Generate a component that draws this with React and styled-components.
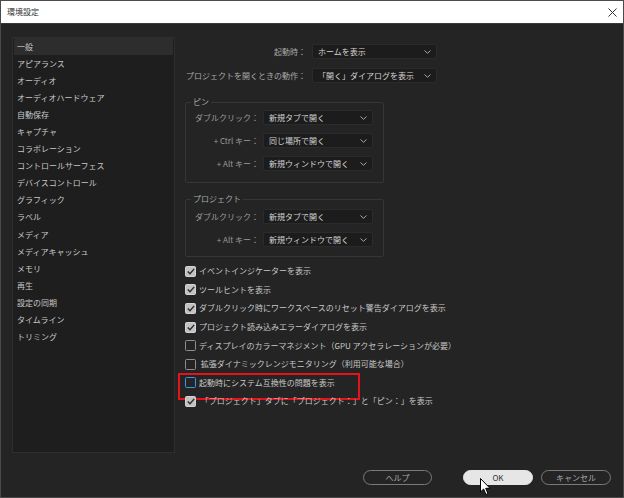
import React from "react";
import styled, { createGlobalStyle } from "styled-components";

const Global = createGlobalStyle`
  html, body { margin: 0; padding: 0; background: #242424; }
  body { font-family: "Noto Sans CJK JP", "Noto Sans", sans-serif; }
  * { box-sizing: border-box; }
`;

const Window = styled.div`
  position: relative;
  width: 624px;
  height: 498px;
  background: #242424;
  border: 1px solid #4a4a4a;
  display: flex;
  flex-direction: column;
  overflow: hidden;
  font-size: 8px;
  line-height: 1;
`;

const TitleBar = styled.div`
  height: 23px;
  background: #ffffff;
  border-bottom: 1px solid #3a3a3a;
  display: flex;
  align-items: center;
  justify-content: space-between;
  padding: 0 6px 0 6px;
  color: #333;
  font-size: 8px;
  flex-shrink: 0;
`;

const CloseIcon = () => (
  <svg width="9" height="9" viewBox="0 0 9 9">
    <path d="M0.5 0.5 L8.5 8.5 M8.5 0.5 L0.5 8.5" stroke="#333" strokeWidth="1" />
  </svg>
);

const Body = styled.div`
  flex: 1;
  display: flex;
  padding: 13px 0 0 11px;
  gap: 10px;
`;

const Sidebar = styled.div`
  width: 163px;
  height: 416px;
  background: #1e1e1e;
  border: 1px solid #2e2e2e;
  padding: 0 1px;
  display: flex;
  flex-direction: column;
`;

const NavItem = styled.div`
  height: 17.1px;
  display: flex;
  align-items: center;
  padding-left: 3px;
  color: #c8c8c8;
  background: ${(p) => (p.$active ? "#2d2d2d" : "transparent")};
`;

const Content = styled.div`
  display: flex;
  flex-direction: column;
  padding-top: 7px;
`;

const TopGrid = styled.div`
  display: grid;
  grid-template-columns: 121px 125px;
  column-gap: 6px;
  row-gap: 9px;
  align-items: center;
`;

const Label = styled.div`
  text-align: right;
  color: ${(p) => p.$color || "#a8a8a8"};
  white-space: nowrap;
`;

const SelectBox = styled.div`
  height: 15px;
  background: #1c1c1c;
  border: 1px solid #2b2b2b;
  border-radius: 2px;
  display: flex;
  align-items: center;
  justify-content: space-between;
  padding: 0 5px 0 5px;
  color: #d4d4d4;
  white-space: nowrap;
`;

const Chevron = () => (
  <svg width="7" height="4" viewBox="0 0 7 4">
    <path d="M0.5 0.5 L3.5 3.3 L6.5 0.5" stroke="#a8a8a8" strokeWidth="1" fill="none" />
  </svg>
);

const Select = ({ value }) => (
  <SelectBox>
    <span>{value}</span>
    <Chevron />
  </SelectBox>
);

const Group = styled.fieldset`
  margin: ${(p) => p.$mt || 0}px 0 0 0;
  width: 198px;
  border: 1px solid #363636;
  border-radius: 2px;
  padding: ${(p) => p.$pt || 4}px 10px ${(p) => p.$pb || 11}px 9px;
  display: grid;
  grid-template-columns: 64px 110px;
  column-gap: 4px;
  row-gap: 8px;
  align-items: center;
`;

const Legend = styled.legend`
  padding: 0 2px;
  margin-left: -4px;
  color: #a8a8a8;
  font-size: 8px;
  line-height: 8px;
`;

const Checks = styled.div`
  display: flex;
  flex-direction: column;
  margin-top: 5px;
`;

const CheckRow = styled.div`
  position: relative;
  height: 18.6px;
  display: flex;
  align-items: center;
  gap: 3px;
  color: #c8c8c8;
  white-space: nowrap;
  ${(p) =>
    p.$highlight &&
    `
    &::after {
      content: "";
      position: absolute;
      left: -7px;
      top: -1px;
      width: 178px;
      height: 23px;
      border: 2px solid #e3141c;
    }
  `}
`;

const Box = styled.div`
  width: 11px;
  height: 11px;
  border-radius: 1.5px;
  flex-shrink: 0;
  display: flex;
  align-items: center;
  justify-content: center;
  background: ${(p) => (p.$checked ? "#c2c2c2" : "transparent")};
  border: ${(p) => (p.$focus ? "1.5px solid #3d94ea" : p.$checked ? "1px solid #d4d4d4" : "1px solid #8e8e8e")};
`;

const CheckMark = () => (
  <svg width="8" height="7" viewBox="0 0 8 7">
    <path d="M0.8 3.6 L3 5.8 L7.2 0.9" stroke="#2a2a2a" strokeWidth="1.4" fill="none" />
  </svg>
);

const Check = ({ checked, focus, highlight, children }) => (
  <CheckRow $highlight={highlight}>
    <Box $checked={checked} $focus={focus}>{checked && <CheckMark />}</Box>
    <span>{children}</span>
  </CheckRow>
);

const Footer = styled.div`
  display: flex;
  justify-content: flex-end;
  align-items: center;
  padding: 0 12px 12px 0;
  gap: 8px;
`;

const Button = styled.div`
  width: ${(p) => p.$w || 70}px;
  height: 15px;
  border-radius: 8px;
  display: flex;
  align-items: center;
  justify-content: center;
  margin-right: ${(p) => p.$mr || 0}px;
  background: ${(p) => (p.$primary ? "#e6e6e6" : "transparent")};
  border: 1px solid ${(p) => (p.$primary ? "#e6e6e6" : "#7a7a7a")};
  color: ${(p) => (p.$primary ? "#333" : "#a8a8a8")};
  font-size: 8px;
`;

const CursorWrap = styled.div`
  position: absolute;
  left: 479px;
  top: 477px;
  width: 12px;
  height: 18px;
`;

const Cursor = () => (
  <CursorWrap>
    <svg width="12" height="18" viewBox="0 0 12 18">
      <path
        d="M0.5 0.5 L0.5 14 L3.6 11 L6 16.5 L8 15.6 L5.7 10.3 L10 10.3 Z"
        fill="#fff"
        stroke="#000"
        strokeWidth="1"
        strokeLinejoin="round"
      />
    </svg>
  </CursorWrap>
);

const nav = [
  "一般",
  "アピアランス",
  "オーディオ",
  "オーディオハードウェア",
  "自動保存",
  "キャプチャ",
  "コラボレーション",
  "コントロールサーフェス",
  "デバイスコントロール",
  "グラフィック",
  "ラベル",
  "メディア",
  "メディアキャッシュ",
  "メモリ",
  "再生",
  "設定の同期",
  "タイムライン",
  "トリミング",
];

export default function App() {
  return (
    <>
      <Global />
      <Window>
        <TitleBar>
          <span>環境設定</span>
          <CloseIcon />
        </TitleBar>
        <Body>
          <Sidebar>
            {nav.map((n, i) => (
              <NavItem key={n} $active={i === 0}>
                {n}
              </NavItem>
            ))}
          </Sidebar>
          <Content>
            <TopGrid>
              <Label>起動時：</Label>
              <Select value="ホームを表示" />
              <Label>プロジェクトを開くときの動作：</Label>
              <Select value="「開く」ダイアログを表示" />
            </TopGrid>
            <Group $mt={15} $pt={4} $pb={11}>
              <Legend>ピン</Legend>
              <Label $color="#9c9c9c">ダブルクリック：</Label>
              <Select value="新規タブで開く" />
              <Label $color="#9c9c9c">+ Ctrl キー：</Label>
              <Select value="同じ場所で開く" />
              <Label $color="#9c9c9c">+ Alt キー：</Label>
              <Select value="新規ウィンドウで開く" />
            </Group>
            <Group $mt={12} $pt={6} $pb={9}>
              <Legend>プロジェクト</Legend>
              <Label $color="#9c9c9c">ダブルクリック：</Label>
              <Select value="新規タブで開く" />
              <Label $color="#9c9c9c">+ Alt キー：</Label>
              <Select value="新規ウィンドウで開く" />
            </Group>
            <Checks>
              <Check checked>イベントインジケーターを表示</Check>
              <Check checked>ツールヒントを表示</Check>
              <Check checked>ダブルクリック時にワークスペースのリセット警告ダイアログを表示</Check>
              <Check checked>プロジェクト読み込みエラーダイアログを表示</Check>
              <Check>ディスプレイのカラーマネジメント（GPU アクセラレーションが必要）</Check>
              <Check>&nbsp;拡張ダイナミックレンジモニタリング（利用可能な場合）</Check>
              <Check focus highlight>起動時にシステム互換性の問題を表示</Check>
              <Check checked>&nbsp;「プロジェクト」タブに「プロジェクト：」と「ピン：」を表示</Check>
            </Checks>
          </Content>
        </Body>
        <Footer>
          <Button $w={69} $mr={23}>ヘルプ</Button>
          <Button $primary>OK</Button>
          <Button>キャンセル</Button>
        </Footer>
        <Cursor />
      </Window>
    </>
  );
}
